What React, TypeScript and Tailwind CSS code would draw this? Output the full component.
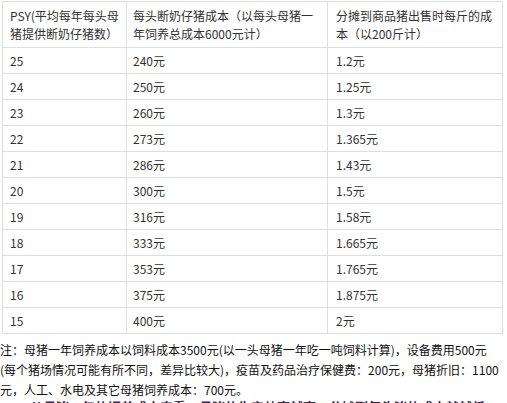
import React from "react";

const rows: [string, string, string][] = [
  ["25", "240元", "1.2元"],
  ["24", "250元", "1.25元"],
  ["23", "260元", "1.3元"],
  ["22", "273元", "1.365元"],
  ["21", "286元", "1.43元"],
  ["20", "300元", "1.5元"],
  ["19", "316元", "1.58元"],
  ["18", "333元", "1.665元"],
  ["17", "353元", "1.765元"],
  ["16", "375元", "1.875元"],
  ["15", "400元", "2元"],
];

const font = { fontFamily: '"Noto Sans CJK SC", "Noto Sans", sans-serif' };

export default function App() {
  return (
    <div className="w-[507px] h-[403px] overflow-hidden bg-white" style={font}>
      <div className="pt-[1px] pl-[2px]">
        <div className="w-[501px] border-l border-t border-[#dedede] text-[12px] text-[#333] leading-[18px]">
          <div className="grid grid-cols-[124px_201px_175px]">
            <div className="h-[46px] border-r border-b border-[#dedede] pl-[7px] flex items-center whitespace-nowrap">
              <div>PSY(平均每年每头母<br />猪提供断奶仔猪数）</div>
            </div>
            <div className="h-[46px] border-r border-b border-[#dedede] pl-[6px] flex items-center whitespace-nowrap">
              <div>每头断奶仔猪成本（以每头母猪一<br />年饲养总成本6000元计）</div>
            </div>
            <div className="h-[46px] border-r border-b border-[#dedede] pl-[8px] flex items-center whitespace-nowrap">
              <div>分摊到商品猪出售时每斤的成<br />本（以200斤计）</div>
            </div>
            {rows.map((r) => (
              <React.Fragment key={r[0]}>
                <div className="h-[26px] border-r border-b border-[#dedede] pl-[7px] flex items-center">{r[0]}</div>
                <div className="h-[26px] border-r border-b border-[#dedede] pl-[6px] flex items-center">{r[1]}</div>
                <div className="h-[26px] border-r border-b border-[#dedede] pl-[8px] flex items-center">{r[2]}</div>
              </React.Fragment>
            ))}
          </div>
        </div>
      </div>
      <div className="mt-[6px] text-[12px] leading-[20px] text-[#111] whitespace-nowrap">
        <div>注：母猪一年饲养成本以饲料成本3500元(以一头母猪一年吃一吨饲料计算)，设备费用500元</div>
        <div>(每个猪场情况可能有所不同，差异比较大)，疫苗及药品治疗保健费：200元，母猪折旧：1100</div>
        <div>元，人工、水电及其它母猪饲养成本：700元。</div>
        <div className="pl-[30px] font-bold text-[13px] leading-[13px] text-[#3a2a45]">
          从母猪一年的饲养成本来看，母猪的生产效率越高，分摊到每头猪的成本就越低。
        </div>
      </div>
    </div>
  );
}
